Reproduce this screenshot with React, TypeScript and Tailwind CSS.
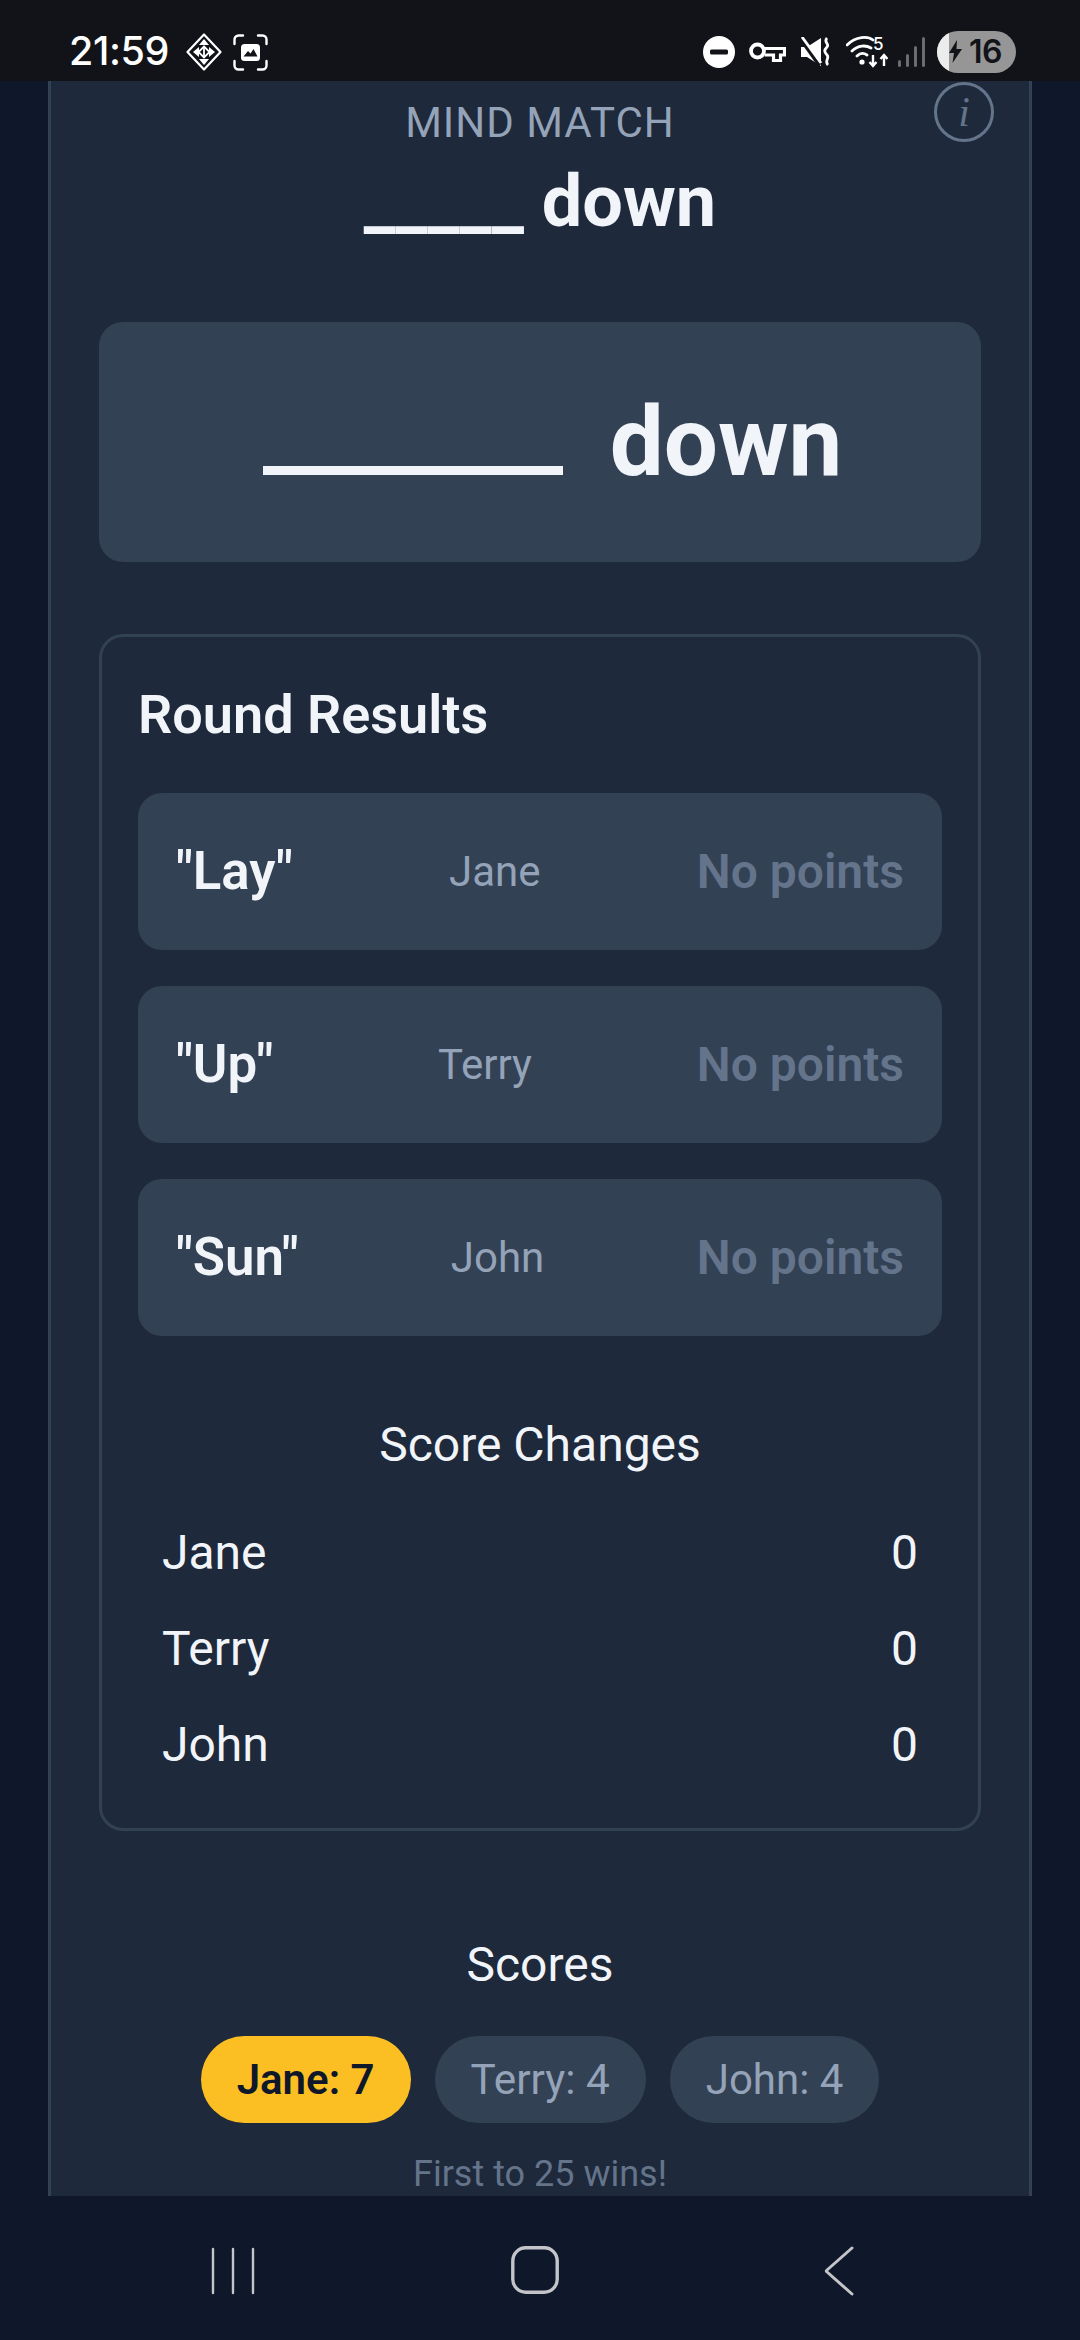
const results = [
  { word: '"Lay"', name: "Jane" },
  { word: '"Up"', name: "Terry" },
  { word: '"Sun"', name: "John" },
];

const changes = ["Jane", "Terry", "John"];

function StatusBar() {
  return (
    <div className="relative flex h-[81px] shrink-0 items-center justify-between bg-[#111318] pl-[69px] pr-[64px] pt-[23px] font-['Inter',sans-serif] text-white">
      <div className="flex items-center">
        <span className="text-[39.500px] font-medium leading-none tracking-[-0.4px]">21:59</span>
        <svg className="ml-[17px]" width="36" height="38" viewBox="0 0 36 38" fill="none">
          <path d="M18 1.500 34.500 19 18 36.500 1.500 19Z" stroke="white" strokeWidth="2.200" strokeLinejoin="round" />
          <path d="M18 6 13 12h10ZM18 32l5-6H13ZM7 19l6-5v10ZM29 19l-6-5v10Z" fill="white" />
          <path d="M18 13.500 23.500 19 18 24.500 12.500 19Z" stroke="white" strokeWidth="1.800" />
          <path d="M18 13.500V24.500" stroke="white" strokeWidth="1.800" />
        </svg>
        <svg className="ml-[11px]" width="35" height="37" viewBox="0 0 35 37" fill="none">
          <path d="M1.500 10V5.500a4 4 0 0 1 4-4H10M25 1.500h4.500a4 4 0 0 1 4 4V10M33.500 27v4.500a4 4 0 0 1-4 4H25M10 35.500H5.500a4 4 0 0 1-4-4V27" stroke="white" strokeWidth="2.400" strokeLinecap="round" />
          <rect x="8" y="10" width="19" height="17" rx="3.500" fill="white" />
          <path d="M10.500 22.500 15 17l2.500 2.500L20.500 15l4 7.500Z" fill="#111318" />
        </svg>
      </div>
      <div className="flex items-center">
        <svg width="32" height="32" viewBox="0 0 32 32">
          <circle cx="16" cy="16" r="16" fill="white" />
          <rect x="7" y="13.500" width="18" height="5" rx="1.500" fill="#111318" />
        </svg>
        <svg className="ml-[14px]" width="37" height="20" viewBox="0 0 37 20" fill="none">
          <circle cx="8.500" cy="9" r="6.500" stroke="white" strokeWidth="3.800" />
          <path d="M15 6.500h20.500v6.500h-4v5.500h-7V13h-9" stroke="white" strokeWidth="3.200" />
        </svg>
        <svg className="ml-[14px]" width="30" height="30" viewBox="0 0 30 30" fill="none">
          <path d="M1 10h6l14-9v28L7 20H1Z" fill="white" />
          <path d="M0 0 20 28" stroke="#111318" strokeWidth="5" />
          <path d="M2 0 21 26" stroke="white" strokeWidth="2.800" />
          <path d="M27 1c-4 4 3 6 0 9s-3 5 0 8-3 6 1 10" stroke="white" strokeWidth="2.800" />
        </svg>
        <svg className="ml-[16px] mt-[-8px]" width="42" height="40" viewBox="0 -8 42 40" fill="none">
          <path d="M1 9c9-9 21-9 26-5M6 15c6-6 14-6 19-3M11 20c3-3 7-3 10-1" stroke="white" strokeWidth="2.800" strokeLinecap="round" />
          <circle cx="16" cy="26" r="2.600" fill="white" />
          <path d="M27 19v11M23.500 26l3.500 4 3.500-4M38 30V19M34.500 23l3.500-4 3.500 4" stroke="white" strokeWidth="2.400" />
          <text x="27" y="14" fontSize="17" fill="white" fontFamily="Inter, sans-serif" fontWeight="500">5</text>
        </svg>
        <svg className="ml-[10px]" width="27" height="30" viewBox="0 0 27 30">
          <rect x="0" y="23" width="3" height="7" rx="1.500" fill="#6a6c70" />
          <rect x="8" y="17" width="3" height="13" rx="1.500" fill="#6a6c70" />
          <rect x="16" y="9" width="3" height="21" rx="1.500" fill="#6a6c70" />
          <rect x="24" y="0" width="3" height="30" rx="1.500" fill="#6a6c70" />
        </svg>
        <div className="relative ml-[12px] flex h-[42px] w-[79px] items-center overflow-hidden rounded-full bg-[#969696] pl-[32px] text-[#111318]">
          <div className="absolute inset-y-0 left-0 w-[12px] bg-[#ececec]" />
          <svg className="absolute left-[12px] top-[9px]" width="13" height="23" viewBox="0 0 13 23">
            <path d="M8 0 0 13h5l-1.500 10L13 9H7.500Z" fill="#111318" />
          </svg>
          <span className="text-[32px] font-semibold leading-none tracking-[-0.5px]">16</span>
        </div>
      </div>
    </div>
  );
}

function NavBar() {
  return (
    <div className="flex h-[144px] shrink-0 items-start bg-[#0f172a] pl-[210px] pt-[50px]">
      <svg width="46" height="48" viewBox="0 0 46 48" className="mt-[1px]">
        <path d="M3 2v44M23 2v44M43 2v44" stroke="#c3c5c9" strokeWidth="2.400" strokeLinecap="round" />
      </svg>
      <svg width="48" height="48" viewBox="0 0 48 48" fill="none" className="ml-[255px]">
        <rect x="1.800" y="1.800" width="44.400" height="44.400" rx="13" stroke="#c3c5c9" strokeWidth="3.400" />
      </svg>
      <svg width="32" height="50" viewBox="0 0 32 50" fill="none" className="ml-[264px]">
        <path d="M29 2 3.500 24.500a1 1 0 0 0 0 1L29 48" stroke="#c3c5c9" strokeWidth="3" strokeLinecap="round" strokeLinejoin="round" />
      </svg>
    </div>
  );
}

export default function App() {
  return (
    <div className="flex h-[2340px] w-[1080px] flex-col overflow-hidden bg-[#0f172a] font-['Roboto',sans-serif] text-[#f1f5f9]">
      <StatusBar />
      <div className="min-h-0 flex-1 overflow-hidden px-[48px]">
        <main className="relative h-full border-x-[3px] border-[#334155] bg-[#1e293b] px-[48px]">
          <div className="absolute right-[35px] top-[1px] flex h-[60px] w-[60px] items-center justify-center rounded-full border-[3px] border-[#64748b] font-['Liberation_Serif',serif] text-[42px] italic leading-none text-[#64748b]">
            i
          </div>
          <p className="pt-[18px] text-center text-[42px] leading-[48px] tracking-[1px] text-[#94a3b8]">MIND MATCH</p>
          <h1 className="mt-[13px] text-center text-[72px] font-bold leading-[84px]">_____ down</h1>

          <div className="mt-[78px] flex h-[240px] items-center justify-center rounded-[24px] bg-[#334155] pl-[25px] text-[96px] font-bold">
            <div className="flex items-baseline gap-[47px] leading-none">
              <span className="mb-[-2px] inline-block h-[9px] w-[300px] bg-[#f1f5f9]" />
              <span>down</span>
            </div>
          </div>

          <section className="mt-[72px] h-[1197px] rounded-[24px] border-[3px] border-[#334155] px-[36px] pt-[48px]">
            <h2 className="text-[54px] font-semibold leading-[60px]">Round Results</h2>
            <div className="mt-[48px] flex flex-col gap-[36px]">
              {results.map((r) => (
                <div key={r.name} className="flex h-[157px] items-center justify-between rounded-[24px] bg-[#334155] px-[38px]">
                  <span className="text-[52.800px] font-semibold">{r.word}</span>
                  <span className="text-[42px] text-[#94a3b8]">{r.name}</span>
                  <span className="text-[48px] font-semibold text-[#64748b]">No points</span>
                </div>
              ))}
            </div>
            <h3 className="mt-[82px] text-center text-[48px] leading-[54px]">Score Changes</h3>
            <div className="mt-[57px] flex flex-col gap-[48px] px-[24px]">
              {changes.map((name) => (
                <div key={name} className="flex items-center justify-between text-[48px] leading-[48px]">
                  <span>{name}</span>
                  <span>0</span>
                </div>
              ))}
            </div>
          </section>

          <h3 className="mt-[107px] text-center text-[48px] leading-[54px]">Scores</h3>
          <div className="mt-[44px] flex justify-center gap-[24px]">
            <div className="flex h-[87px] items-center rounded-full bg-[#fbbf24] px-[36px] text-[42px] font-semibold text-[#0f172a]">Jane: 7</div>
            <div className="flex h-[87px] items-center rounded-full bg-[#334155] px-[36px] text-[42.300px] text-[#94a3b8]">Terry: 4</div>
            <div className="flex h-[87px] items-center rounded-full bg-[#334155] px-[36px] text-[42px] text-[#94a3b8]">John: 4</div>
          </div>
          <p className="mt-[30px] text-center text-[36px] leading-[42px] text-[#64748b]">First to 25 wins!</p>
        </main>
      </div>
      <NavBar />
    </div>
  );
}
